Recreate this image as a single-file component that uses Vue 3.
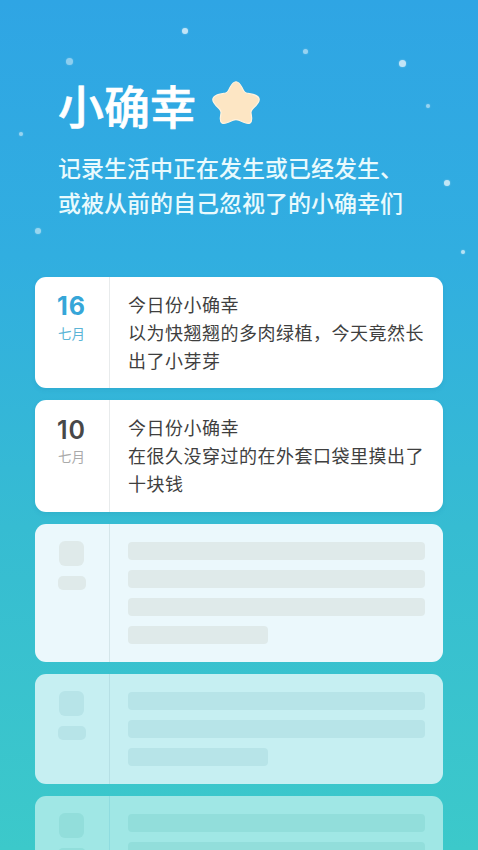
<script setup>
const dots = [
  { x: 69, y: 61, s: 7, o: 0.45 },
  { x: 185, y: 31, s: 6, o: 0.7 },
  { x: 305, y: 51, s: 5, o: 0.5 },
  { x: 402, y: 63, s: 7, o: 0.7 },
  { x: 428, y: 106, s: 4, o: 0.5 },
  { x: 21, y: 134, s: 4, o: 0.5 },
  { x: 447, y: 183, s: 6, o: 0.7 },
  { x: 38, y: 231, s: 6, o: 0.5 },
  { x: 463, y: 252, s: 4, o: 0.65 },
]
const entries = [
  { day: '16', month: '七月', active: true, lines: ['今日份小确幸', '以为快翘翘的多肉绿植，今天竟然长', '出了小芽芽'] },
  { day: '10', month: '七月', active: false, lines: ['今日份小确幸', '在很久没穿过的在外套口袋里摸出了', '十块钱'] },
]
const ghosts = [
  { cls: 'g1', bars: [1, 1, 1, 0.47] },
  { cls: 'g2', bars: [1, 1, 0.47] },
  { cls: 'g3', bars: [1, 1, 1] },
]
</script>

<template>
  <div class="page">
    <span
      v-for="(d, i) in dots"
      :key="i"
      class="dot"
      :style="{ left: d.x - d.s / 2 + 'px', top: d.y - d.s / 2 + 'px', width: d.s + 'px', height: d.s + 'px', opacity: d.o }"
    ></span>

    <header class="head">
      <div class="title-row">
        <h1 class="title">小确幸</h1>
        <svg class="star" viewBox="0 0 50 50" width="50" height="50">
          <path
            d="M19 9.500Q25 -2 31 9.500L32.500 12.500Q33.500 14.500 35.500 15L41 16.200Q53 19 45 27.500L41.500 31Q39.800 33 40 35L40.500 38.500Q42 48.500 32 44L28 42.300Q25 41 22 42.300L18 44Q8 48.500 9.500 38.500L10 35Q10.200 33 8.500 31L5 27.500Q-3 19 9 16.200L14.500 15Q16.500 14.500 17.500 12.500Z"
            fill="#fde6c4"
            stroke="#fff3df"
            stroke-width="1.200"
          />
        </svg>
      </div>
      <p class="sub">记录生活中正在发生或已经发生、<br />或被从前的自己忽视了的小确幸们</p>
    </header>

    <main class="list">
      <section v-for="e in entries" :key="e.day" class="card" :class="{ tall: !e.active }">
        <div class="date" :class="{ active: e.active }">
          <span class="day">{{ e.day }}</span>
          <span class="month">{{ e.month }}</span>
        </div>
        <div class="text">
          <p v-for="l in e.lines" :key="l">{{ l }}</p>
        </div>
      </section>

      <section v-for="g in ghosts" :key="g.cls" class="card ghost" :class="g.cls">
        <div class="date">
          <span class="sq"></span>
          <span class="pill"></span>
        </div>
        <div class="bars">
          <span v-for="(b, i) in g.bars" :key="i" class="bar" :style="{ width: b * 100 + '%' }"></span>
        </div>
      </section>
    </main>
  </div>
</template>

<style scoped>
.page {
  position: relative;
  width: 478px;
  height: 850px;
  overflow: hidden;
  background: linear-gradient(180deg, #2fa5e4 0%, #31aee0 30%, #36bcd2 62%, #3cc9ca 100%);
  font-family: "Noto Sans CJK SC", "Noto Sans", sans-serif;
}
.dot {
  position: absolute;
  border-radius: 50%;
  background: #fff;
  box-shadow: 0 0 2px rgba(255, 255, 255, 0.6);
}
.head {
  padding: 72px 0 0 58px;
  height: 277px;
  box-sizing: border-box;
  color: #fff;
}
.title-row {
  display: flex;
  align-items: center;
  gap: 15px;
  height: 64px;
}
.title {
  margin: 0;
  font-size: 46px;
  line-height: 64px;
  font-weight: 500;
  -webkit-text-stroke: 0.6px #fff;
}
.star {
  flex: none;
  margin-top: -3px;
}
.sub {
  margin: 14px 0 0;
  font-size: 23px;
  line-height: 35px;
  font-weight: 500;
  color: #e9fafd;
}
.list {
  display: flex;
  flex-direction: column;
  gap: 12px;
  padding: 0 35px;
}
.card {
  display: flex;
  flex: none;
  min-height: 111px;
  background: #fff;
  border-radius: 11px;
  box-shadow: 0 2px 4px rgba(20, 120, 160, 0.14);
}
.card.tall {
  min-height: 112px;
}
.date {
  flex: none;
  width: 73px;
  padding-right: 1px;
  border-right: 1px solid #e8ebec;
  display: flex;
  flex-direction: column;
  align-items: center;
  padding-top: 13px;
  color: #484848;
}
.day {
  font-family: Inter, "Noto Sans", sans-serif;
  font-size: 25px;
  line-height: 32px;
  font-weight: 600;
  letter-spacing: 1px;
}
.tall .day {
  margin-top: 1px;
}
.month {
  margin-top: 0;
  font-size: 13.500px;
  line-height: 20px;
  color: #aaa;
}
.date.active .day {
  color: #36a6d8;
  font-weight: 700;
}
.date.active .month {
  margin-top: 1px;
  color: #5ab4d6;
}
.text {
  flex: 1;
  padding: 13px 18px 0;
}
.text p {
  margin: 0;
  font-size: 18px;
  line-height: 28px;
  letter-spacing: 0.5px;
  color: #3f3f3f;
  white-space: nowrap;
}
.ghost .date {
  padding-top: 17px;
  border-right-color: var(--line);
}
.ghost {
  background: var(--bg);
  box-shadow: none;
}
.sq {
  width: 25px;
  height: 25px;
  border-radius: 6px;
  background: var(--fill);
}
.pill {
  width: 28px;
  height: 14px;
  margin-top: 10px;
  border-radius: 5px;
  background: var(--fill);
}
.bars {
  flex: 1;
  display: flex;
  flex-direction: column;
  gap: 10px;
  padding: 18px 18px 0;
}
.bar {
  height: 18px;
  border-radius: 4px;
  background: var(--fill);
}
.g1 {
  --bg: #ebf8fc;
  --fill: #dfeaea;
  --line: #d5e6ea;
  min-height: 138px;
}
.g2 {
  --bg: #c6eff2;
  --fill: #b7e4e8;
  --line: #b6e0e5;
  min-height: 110px;
}
.g3 {
  --bg: #a0e7e5;
  --fill: #92dedb;
  --line: #8fdcdf;
  min-height: 110px;
}
</style>
